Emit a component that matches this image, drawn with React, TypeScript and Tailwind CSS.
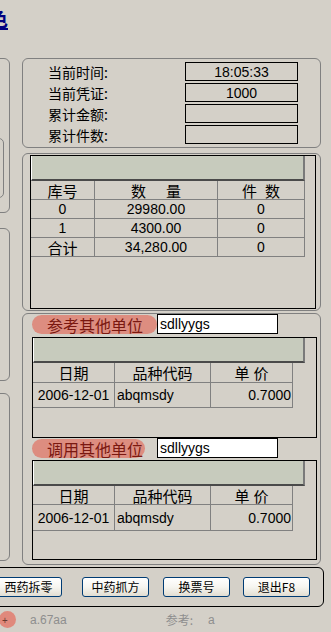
const CJK = "font-['Noto_Sans_CJK_SC','Liberation_Sans',sans-serif]";
const LAT = "font-['Liberation_Sans','Noto_Sans_CJK_SC',sans-serif]";

function InfoRow({ label, value }: { label: string; value: string }) {
  return (
    <div className="flex items-center h-[19px]">
      <div className={`w-[137px] text-[14px] leading-none text-black ${CJK}`}>{label}</div>
      <div className={`w-[113px] h-[19px] border border-black flex items-center justify-center text-[14px] leading-none text-black ${LAT}`}>
        {value}
      </div>
    </div>
  );
}

function HeaderBar({ w }: { w: string }) {
  return (
    <div
      className={`${w} h-[25px] bg-[#c7cbbd] border-l border-l-white border-r-2 border-r-[#7a7a7a] border-b-2 border-b-[#4a4a4a]`}
    />
  );
}

function StockTable() {
  const rows = [
    ["0", "29980.00", "0"],
    ["1", "4300.00", "0"],
    ["合计", "34,280.00", "0"],
  ];
  const cell = "h-[19px] border-r border-b border-[#808080] flex items-center justify-center leading-none";
  return (
    <div className="flex flex-col">
      <div className="flex">
        <div className={`${cell} w-[64px] text-[15px] ${CJK}`}>库号</div>
        <div className={`${cell} w-[123px] text-[15px] ${CJK}`}>
          <span className="tracking-[20px] pl-[20px]">数量</span>
        </div>
        <div className={`${cell} w-[87px] text-[15px] ${CJK}`}>
          <span className="tracking-[8px] pl-[8px]">件数</span>
        </div>
      </div>
      {rows.map((r, i) => (
        <div className="flex" key={i}>
          <div className={`${cell} w-[64px] ${i === 2 ? `text-[15px] ${CJK}` : `text-[14px] ${LAT}`}`}>{r[0]}</div>
          <div className={`${cell} w-[123px] text-[14px] ${LAT}`}>{r[1]}</div>
          <div className={`${cell} w-[87px] text-[14px] ${LAT}`}>{r[2]}</div>
        </div>
      ))}
    </div>
  );
}

function PriceTable({ headH, dataH }: { headH: string; dataH: string }) {
  const b = "border-r border-b border-[#808080] flex items-center leading-none";
  return (
    <div className="flex flex-col">
      <div className="flex">
        <div className={`${b} ${headH} w-[82px] justify-center text-[15px] ${CJK}`}>日期</div>
        <div className={`${b} ${headH} w-[96px] justify-center text-[15px] ${CJK}`}>品种代码</div>
        <div className={`${b} ${headH} w-[82px] justify-center text-[15px] tracking-[4px] pl-[4px] ${CJK}`}>单价</div>
      </div>
      <div className="flex">
        <div className={`${b} ${dataH} w-[82px] justify-center text-[14px] ${LAT}`}>2006-12-01</div>
        <div className={`${b} ${dataH} w-[96px] pl-[2px] text-[14px] ${LAT}`}>abqmsdy</div>
        <div className={`${b} ${dataH} w-[82px] justify-end pr-[1px] text-[14px] ${LAT}`}>0.7000</div>
      </div>
    </div>
  );
}

function PillRow({ label, w }: { label: string; w: string }) {
  return (
    <div className="flex items-end h-[20px]">
      <div
        className={`${w} h-[19px] rounded-full bg-[#dd8d80] pl-[15px] flex items-center text-[16px] leading-none text-[#7a1810] ${CJK}`}
      >
        {label}
      </div>
      <div className={`ml-auto mr-0 w-[121px] h-[20px] bg-white border border-black flex items-center pl-[2px] text-[14px] leading-none text-black ${LAT}`}>
        sdllyygs
      </div>
    </div>
  );
}

function Btn({ label, cls }: { label: string; cls: string }) {
  return (
    <div
      className={`${cls} w-[67px] h-[20px] shrink-0 rounded-[3px] border border-[#003c74] bg-linear-to-b from-[#ffffff] via-[#f6f5f0] to-[#e2ded2] flex items-center justify-center text-[12px] leading-none text-black ${CJK}`}
    >
      {label}
    </div>
  );
}

export default function App() {
  return (
    <div className="w-[331px] h-[632px] bg-[#d4d0c8] overflow-hidden flex flex-col">
      {/* title */}
      <div className="h-[58px] shrink-0 pt-[9px]">
        <span className={`-ml-[12px] text-[20px] leading-[20px] font-bold underline text-[#000080] ${CJK}`}>色</span>
      </div>

      {/* middle */}
      <div className="flex h-[507px] shrink-0">
        {/* left partial panels */}
        <div className="w-[40px] -ml-[30px] shrink-0 flex flex-col">
          <div className="h-[155px] rounded-[6px] border border-[#808080]">
            <div className="mt-[79px] w-[33px] h-[60px] rounded-[5px] border border-[#808080]" />
          </div>
          <div className="mt-[15px] h-[153px] rounded-[6px] border border-[#808080]" />
          <div className="mt-[12px] h-[168px] rounded-[6px] border border-[#808080]" />
        </div>

        {/* right column */}
        <div className="ml-[12px] w-[299px] shrink-0 flex flex-col">
          <div className="h-[90px] rounded-[6px] border border-[#808080] pt-[3px] pl-[25px] flex flex-col gap-[2px]">
            <InfoRow label="当前时间:" value="18:05:33" />
            <InfoRow label="当前凭证:" value="1000" />
            <InfoRow label="累计金额:" value="" />
            <InfoRow label="累计件数:" value="" />
          </div>

          <div className="mt-[5px] h-[158px] rounded-[6px] border border-[#808080] pt-[1px] pl-[7px]">
            <div className="w-[286px] h-[154px] border border-black">
              <HeaderBar w="w-[274px]" />
              <StockTable />
            </div>
          </div>

          <div className="mt-[2px] h-[252px] rounded-[6px] border border-[#808080] pl-[9px] pr-[42px]">
            <PillRow label="参考其他单位" w="w-[125px]" />
            <div className="mt-[3px] w-[285px] h-[101px] border border-black">
              <HeaderBar w="w-[272px]" />
              <PriceTable headH="h-[20px]" dataH="h-[25px]" />
            </div>
            <PillRow label="调用其他单位" w="w-[113px]" />
            <div className="mt-[2px] w-[285px] h-[100px] border border-black">
              <HeaderBar w="w-[272px]" />
              <PriceTable headH="h-[19px]" dataH="h-[26px]" />
            </div>
          </div>
        </div>
      </div>

      {/* bottom button panel */}
      <div className="mt-[2px] -ml-[10px] w-[334px] h-[40px] shrink-0 rounded-[6px] border border-black pt-[9px] flex">
        <Btn label="西药拆零" cls="ml-[4px]" />
        <Btn label="中药抓方" cls="ml-[20px]" />
        <Btn label="换票号" cls="ml-[14px]" />
        <Btn label="退出F8" cls="ml-[13px]" />
      </div>

      {/* status row */}
      <div className="h-[25px] shrink-0 flex items-center">
        <div className="-ml-[1px] w-[17px] h-[17px] rounded-full bg-[#e0897c] flex items-center pl-[3px] text-[10px] leading-none text-[#6a3a30]">
          +
        </div>
        <span className={`ml-[14px] text-[12px] leading-none text-[#8e8e8e] ${LAT}`}>a.67aa</span>
        <span className={`ml-[99px] text-[12px] leading-none text-[#8e8e8e] ${CJK}`}>参考:</span>
        <span className={`ml-[15px] text-[12px] leading-none text-[#8e8e8e] ${LAT}`}>a</span>
      </div>
    </div>
  );
}
